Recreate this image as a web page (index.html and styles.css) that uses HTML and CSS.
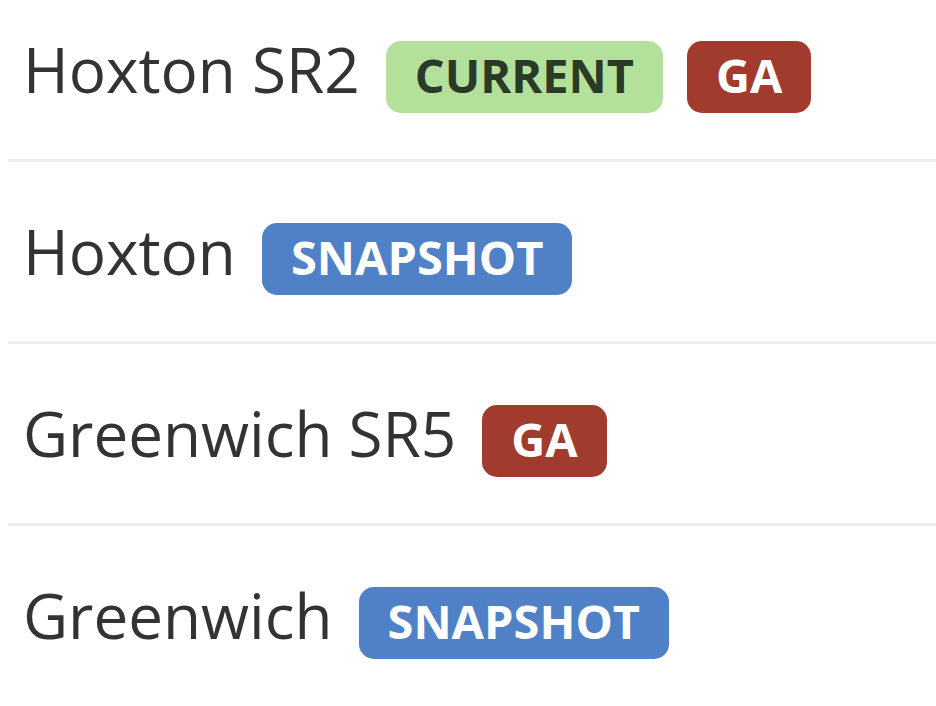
FILE: index.html
```html
<!DOCTYPE html>
<html>
<head>
<meta charset="utf-8">
<link rel="stylesheet" href="styles.css">
</head>
<body>
<ul class="releases">
  <li class="release">
    <span class="name">Hoxton SR2</span>
    <span class="badge badge-current">CURRENT</span>
    <span class="badge badge-ga">GA</span>
  </li>
  <li class="release">
    <span class="name">Hoxton</span>
    <span class="badge badge-snapshot">SNAPSHOT</span>
  </li>
  <li class="release">
    <span class="name">Greenwich SR5</span>
    <span class="badge badge-ga">GA</span>
  </li>
  <li class="release">
    <span class="name">Greenwich</span>
    <span class="badge badge-snapshot">SNAPSHOT</span>
  </li>
</ul>
</body>
</html>
```
FILE: styles.css
```css
html, body {
  margin: 0;
  padding: 0;
  background: #ffffff;
}
body {
  font-family: "Open Sans", "Liberation Sans", sans-serif;
  color: #333333;
}
.releases {
  list-style: none;
  margin: 0;
  padding: 0 0 0 8px;
}
.release {
  display: flex;
  align-items: baseline;
  gap: 24px;
  padding: 53px 0 0 15px;
  height: 126px;
  border-bottom: 3px solid #eeeeee;
}
.release:first-child {
  padding-top: 33px;
}
.release:last-child {
  border-bottom: none;
}
.name {
  font-size: 62px;
  line-height: 72px;
  margin-right: 2px;
}
.badge {
  display: inline-block;
  font-size: 47px;
  font-weight: 700;
  line-height: 47px;
  padding: 11px 29px 14px;
  border-radius: 15px;
  color: #ffffff;
}
.badge-current {
  background: #b3e09b;
  color: #2b3a26;
}
.badge-ga {
  background: #a03b2d;
}
.badge-snapshot {
  background: #5080c6;
}
```
